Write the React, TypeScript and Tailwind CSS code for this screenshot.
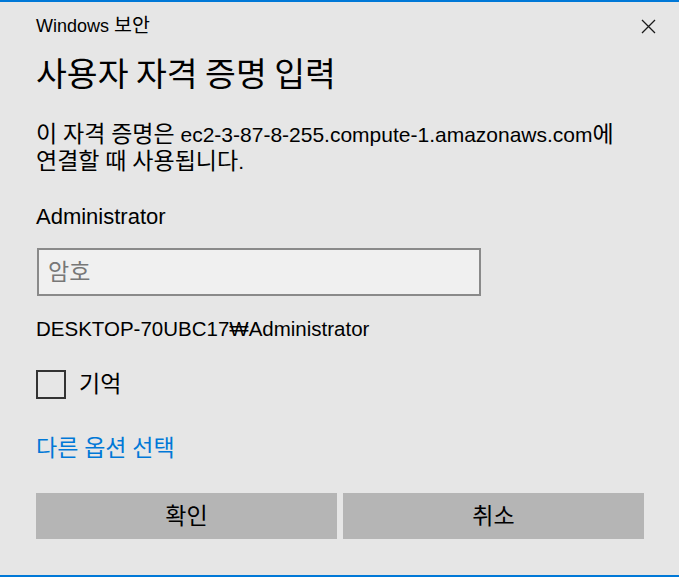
import React from "react";

const font = { fontFamily: '"Liberation Sans", "Noto Sans CJK KR", sans-serif' };

// 한글은 조금 크게 (맑은 고딕 느낌)
function T({ text, k }: { text: string; k: string }) {
  const parts = text.split(/([\uAC00-\uD7A3]+)/);
  return (
    <>
      {parts.map((p, i) =>
        /[\uAC00-\uD7A3]/.test(p) ? (
          <span key={i} className={`${k} leading-[0]`} style={{ fontFamily: '"Noto Sans CJK KR", sans-serif' }}>
            {p}
          </span>
        ) : (
          <React.Fragment key={i}>{p}</React.Fragment>
        )
      )}
    </>
  );
}

export default function App() {
  return (
    <div
      className="w-[679px] h-[577px] bg-[#e6e6e6] border-t-2 border-b-2 border-[#0078d7] text-black overflow-hidden"
      style={font}
    >
      <div className="pl-[36px] pr-[35px]">
        {/* 헤더 */}
        <div className="flex items-center justify-between h-[48px]">
          <span className="text-[18px] leading-none">
            <T text="Windows 보안" k="text-[19.5px]" />
          </span>
          <button className="w-[24px] h-[24px] flex items-center justify-center -mr-[16px]" aria-label="닫기">
            <svg width="15" height="15" viewBox="0 0 15 15" fill="none">
              <path d="M1 1 L14 14 M14 1 L1 14" stroke="#1a1a1a" strokeWidth="1.3" />
            </svg>
          </button>
        </div>

        {/* 제목 */}
        <div
          className="h-[44px] flex items-center text-[33.5px] leading-none"
          style={{ fontFamily: '"Noto Sans CJK KR", sans-serif' }}
        >
          사용자 자격 증명 입력
        </div>

        {/* 설명 */}
        <div className="mt-[27px] text-[21px] leading-[27px]">
          <div>
            <T text="이 자격 증명은 ec2-3-87-8-255.compute-1.amazonaws.com에" k="text-[23px]" />
          </div>
          <div>
            <T text="연결할 때 사용됩니다." k="text-[23px]" />
          </div>
        </div>

        <div className="mt-[28px] text-[22px] leading-[27px]">Administrator</div>

        {/* 암호 입력 */}
        <div className="mt-[18px] w-[444px] h-[48px] ml-[1px] border-2 border-[#8a8a8a] bg-[#f0f0f0] flex items-center px-[9px]">
          <span className="text-[21px] leading-[27px] text-[#777777]">
            <T text="암호" k="text-[23px]" />
          </span>
        </div>

        <div className="mt-[19px] text-[20.5px] leading-[27px]">DESKTOP-70UBC17₩Administrator</div>

        {/* 기억 */}
        <div className="mt-[27px] flex items-center h-[30px] gap-[13px]">
          <div className="w-[30px] h-[29px] border-2 border-[#333333]" />
          <span className="text-[21px] leading-[27px]">
            <T text="기억" k="text-[23px]" />
          </span>
        </div>

        <div className="mt-[36px] text-[21px] leading-[27px] text-[#0078d7]">
          <T text="다른 옵션 선택" k="text-[23px]" />
        </div>

        {/* 버튼 */}
        <div className="mt-[31px] flex gap-[6px]">
          <button className="flex-1 h-[46px] bg-[#b5b5b5] text-[21px] leading-[27px]">
            <T text="확인" k="text-[23px]" />
          </button>
          <button className="flex-1 h-[46px] bg-[#b5b5b5] text-[21px] leading-[27px]">
            <T text="취소" k="text-[23px]" />
          </button>
        </div>
      </div>
    </div>
  );
}
